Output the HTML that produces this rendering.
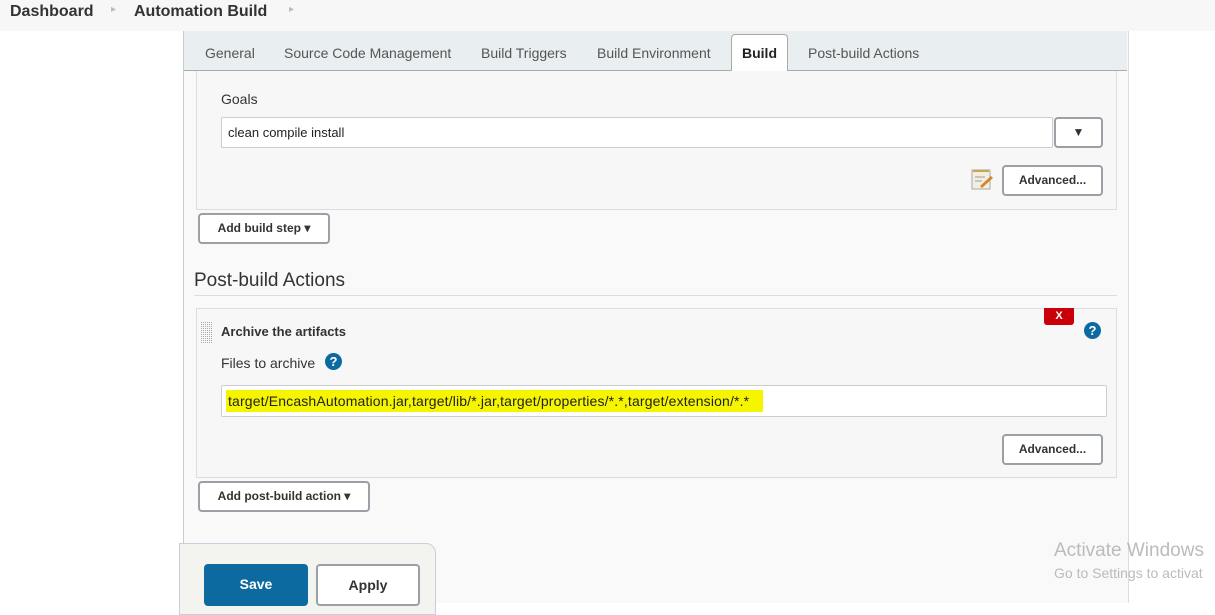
<!DOCTYPE html>
<html><head><style>
body{margin:0;width:1215px;height:603px;overflow:hidden;background:#fff;font-family:"Liberation Sans",sans-serif;color:#333;position:relative}
.a{position:absolute}
.btn{position:absolute;background:#fff;border:2px solid #9aa0a6;border-radius:4px;box-sizing:border-box;font-size:12px;font-weight:bold;color:#333;text-align:center}
.tab{position:absolute;top:45px;font-size:14px;color:#555}
.inp{position:absolute;background:#fff;border:1px solid #ccc;border-radius:2px;box-sizing:border-box;font-size:13px;color:#222;padding-left:6px}
.help{position:absolute;width:17px;height:17px;border-radius:50%;background:#0d6aa0;color:#fff;font-size:13px;font-weight:bold;text-align:center;line-height:17px}
</style></head><body>
<div class="a" style="left:0;top:0;width:1215px;height:31px;background:#f7f7f7"></div>
<div class="a" style="left:10px;top:3px;font-size:16px;font-weight:bold;color:#333">Dashboard</div>
<div class="a" style="left:111px;top:4px;font-size:10px;color:#bbb">▸</div>
<div class="a" style="left:134px;top:3px;font-size:16px;font-weight:bold;color:#333">Automation Build</div>
<div class="a" style="left:289px;top:4px;font-size:10px;color:#bbb">▸</div>

<div class="a" style="left:183px;top:31px;width:944px;height:572px;background:#f9f9f9;border-left:1px solid #ccc;border-right:1px solid #ddd"></div>
<div class="a" style="left:184px;top:31px;width:943px;height:39px;background:#e9eef0;border-bottom:1px solid #aaa"></div>
<div class="a" style="left:731px;top:34px;width:55px;height:37px;background:#fff;border:1px solid #aaa;border-bottom:none;border-radius:4px 4px 0 0"></div>
<div class="tab" style="left:205px">General</div>
<div class="tab" style="left:284px">Source Code Management</div>
<div class="tab" style="left:481px">Build Triggers</div>
<div class="tab" style="left:597px">Build Environment</div>
<div class="tab" style="left:742px;color:#222;font-weight:bold">Build</div>
<div class="tab" style="left:808px">Post-build Actions</div>

<div class="a" style="left:196px;top:71px;width:919px;height:138px;border:1px solid #ddd;border-top:none;background:#f7f7f7"></div>
<div class="a" style="left:221px;top:91px;font-size:14px;color:#333">Goals</div>
<div class="inp" style="left:221px;top:117px;width:832px;height:31px;line-height:29px">clean compile install</div>
<div class="btn" style="left:1054px;top:117px;width:49px;height:31px;line-height:27px;font-size:12px">▼</div>
<svg class="a" style="left:970px;top:167px" width="24" height="24"><rect x="2" y="3" width="18" height="19" fill="#f3efe0" stroke="#aaa"/><line x1="3" y1="4" x2="19" y2="4" stroke="#c9a64a" stroke-width="2"/><line x1="5" y1="10" x2="15" y2="10" stroke="#999"/><line x1="5" y1="14" x2="12" y2="14" stroke="#999"/><path d="M10 19 L21 9 L23 11 L12 21 Z" fill="#d2872c"/></svg>
<div class="btn" style="left:1002px;top:165px;width:101px;height:31px;line-height:27px">Advanced...</div>

<div class="btn" style="left:198px;top:213px;width:132px;height:31px;line-height:27px">Add build step ▾</div>

<div class="a" style="left:194px;top:270px;font-size:19px;color:#333">Post-build Actions</div>
<div class="a" style="left:194px;top:295px;width:923px;height:1px;background:#ddd"></div>

<div class="a" style="left:196px;top:308px;width:919px;height:168px;border:1px solid #ddd;background:#f7f7f7"></div>
<svg class="a" style="left:201px;top:322px" width="12" height="22"><defs><pattern id="d" width="2" height="2" patternUnits="userSpaceOnUse"><rect width="1" height="1" fill="#aaa"/></pattern></defs><rect width="12" height="22" fill="url(#d)"/></svg>
<div class="a" style="left:221px;top:324px;font-size:13px;font-weight:bold;color:#333">Archive the artifacts</div>
<div class="a" style="left:1044px;top:308px;width:30px;height:17px;background:#c9000a;color:#fff;font-size:11px;font-weight:bold;text-align:center;line-height:17px;border-radius:0 0 3px 3px">X</div>
<div class="help" style="left:1084px;top:322px">?</div>
<div class="a" style="left:221px;top:355px;font-size:14px;color:#333">Files to archive</div>
<div class="help" style="left:325px;top:353px">?</div>
<div class="inp" style="left:221px;top:385px;width:886px;height:32px;line-height:30px;padding-left:4px;font-size:14px"><span style="background:#f6f500;padding:3px 14px 3px 2px;letter-spacing:0.15px">target/EncashAutomation.jar,target/lib/*.jar,target/properties/*.*,target/extension/*.*</span></div>
<div class="btn" style="left:1002px;top:434px;width:101px;height:31px;line-height:27px">Advanced...</div>

<div class="btn" style="left:198px;top:481px;width:172px;height:31px;line-height:27px">Add post-build action ▾</div>

<div class="a" style="left:179px;top:543px;width:255px;height:70px;background:#f3f4ef;border:1px solid #ccd;border-radius:0 10px 0 0"></div>
<div class="a" style="left:204px;top:564px;width:104px;height:42px;background:#0d6aa0;border-radius:4px;color:#fff;font-size:14px;font-weight:bold;text-align:center;line-height:40px">Save</div>
<div class="btn" style="left:316px;top:564px;width:104px;height:42px;line-height:38px;font-size:14px">Apply</div>

<div class="a" style="left:1054px;top:540px;font-size:19px;color:#bbb;white-space:nowrap">Activate Windows</div>
<div class="a" style="left:1054px;top:565px;font-size:14px;color:#bbb;white-space:nowrap">Go to Settings to activat</div>
</body></html>
